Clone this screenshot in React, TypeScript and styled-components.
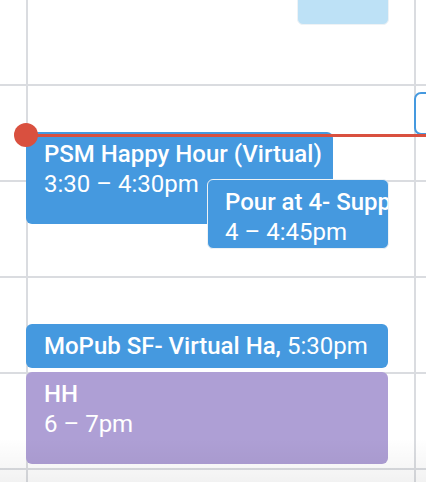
import React from "react";
import styled, { createGlobalStyle } from "styled-components";

const Global = createGlobalStyle`
  html, body { margin: 0; padding: 0; background: #ffffff; }
  body { font-family: Roboto, "Noto Sans", Arial, sans-serif; }
`;

const HOUR = 96;
const START_HOUR = 14; // top of the grid
const LINE = "#dadce0";

const toY = (h: number, m: number) => (h - START_HOUR + m / 60) * HOUR;

type Ev = {
  id: string;
  title?: string;
  time?: string;
  inline?: boolean;
  start: [number, number];
  end: [number, number];
  left: number;
  width: number;
  tone: "blue" | "purple" | "pale";
  bordered?: boolean;
};

const events: Ev[] = [
  { id: "pale", start: [13, 30], end: [14, 25], left: 271, width: 92, tone: "pale", bordered: true },
  { id: "psm", title: "PSM Happy Hour (Virtual)", time: "3:30 – 4:30pm", start: [15, 30], end: [16, 30], left: 0, width: 307, tone: "blue" },
  { id: "pour", title: "Pour at 4- Support Group", time: "4 – 4:45pm", start: [16, 0], end: [16, 45], left: 181, width: 182, tone: "blue", bordered: true },
  { id: "mopub", title: "MoPub SF- Virtual Ha,", time: "5:30pm", inline: true, start: [17, 30], end: [18, 0], left: 0, width: 362, tone: "blue" },
  { id: "hh", title: "HH", time: "6 – 7pm", start: [18, 0], end: [19, 0], left: 0, width: 362, tone: "purple" },
];

const tones = {
  blue: "#4599df",
  purple: "#ae9fd5",
  pale: "#bde1f6",
};

const Viewport = styled.div`
  position: relative;
  width: 426px;
  height: 482px;
  overflow: hidden;
  background: #fff;
`;

const Grid = styled.div`
  display: flex;
  margin-top: -12px;
  height: ${HOUR * 6}px;
  background-image: repeating-linear-gradient(
    to bottom,
    ${LINE} 0px,
    ${LINE} 2px,
    transparent 2px,
    transparent ${HOUR}px
  );
`;

const Gutter = styled.div`
  flex: 0 0 26px;
`;

const DayColumn = styled.div<{ $width?: number }>`
  position: relative;
  flex: ${(p) => (p.$width ? `0 0 ${p.$width}px` : "1 1 auto")};
  background-image: linear-gradient(to right, ${LINE} 2px, transparent 2px);
`;

const EventCard = styled.div<{ $tone: keyof typeof tones; $bordered?: boolean }>`
  position: absolute;
  box-sizing: border-box;
  background: ${(p) => tones[p.$tone]};
  border-radius: 6px;
  border: ${(p) => (p.$bordered ? "1px solid #eef2f5" : "none")};
  padding: 7px 0 0 ${(p) => (p.$bordered ? 17 : 18)}px;
  overflow: hidden;
  color: #ffffff;
  font-size: 24px;
  line-height: 30px;
  white-space: nowrap;
`;

const OutlineEvent = styled.div`
  position: absolute;
  box-sizing: border-box;
  width: 40px;
  border: 2px solid #4599df;
  border-radius: 7px;
  background: #fff;
`;

const Title = styled.div`
  font-weight: 500;
`;

const Time = styled.div`
  font-weight: 400;
`;

const InlineTime = styled.span`
  font-weight: 400;
`;

const NowLine = styled.div`
  position: absolute;
  left: 2px;
  right: -20px;
  height: 3px;
  background: #d9503f;
  z-index: 3;
  &::before {
    content: "";
    position: absolute;
    left: -14px;
    top: -11px;
    width: 24px;
    height: 24px;
    border-radius: 50%;
    background: #d9503f;
  }
`;

const BottomFade = styled.div`
  position: absolute;
  left: 0;
  right: 0;
  bottom: 0;
  height: 44px;
  background: linear-gradient(to bottom, rgba(0, 0, 0, 0), rgba(0, 0, 0, 0.05));
  pointer-events: none;
  z-index: 5;
`;

function EventBlock({ ev }: { ev: Ev }) {
  const top = toY(...ev.start) - (ev.bordered ? 1 : 0);
  const height = toY(...ev.end) - toY(...ev.start) - 4 + (ev.bordered ? 2 : 0);
  return (
    <EventCard
      $tone={ev.tone}
      $bordered={ev.bordered}
      style={{ top, left: ev.left, width: ev.width, height }}
    >
      {ev.title &&
        (ev.inline ? (
          <Title>
            {ev.title} <InlineTime>{ev.time}</InlineTime>
          </Title>
        ) : (
          <>
            <Title>{ev.title}</Title>
            <Time>{ev.time}</Time>
          </>
        ))}
    </EventCard>
  );
}

export default function App() {
  const nowY = toY(15, 31.5);
  return (
    <>
      <Global />
      <Viewport>
        <Grid>
          <Gutter />
          <DayColumn $width={388}>
            {events.map((ev) => (
              <EventBlock key={ev.id} ev={ev} />
            ))}
            <NowLine style={{ top: nowY }} />
          </DayColumn>
          <DayColumn>
            <OutlineEvent style={{ top: toY(15, 5), height: toY(15, 32) - toY(15, 5) }} />
          </DayColumn>
        </Grid>
        <BottomFade />
      </Viewport>
    </>
  );
}
